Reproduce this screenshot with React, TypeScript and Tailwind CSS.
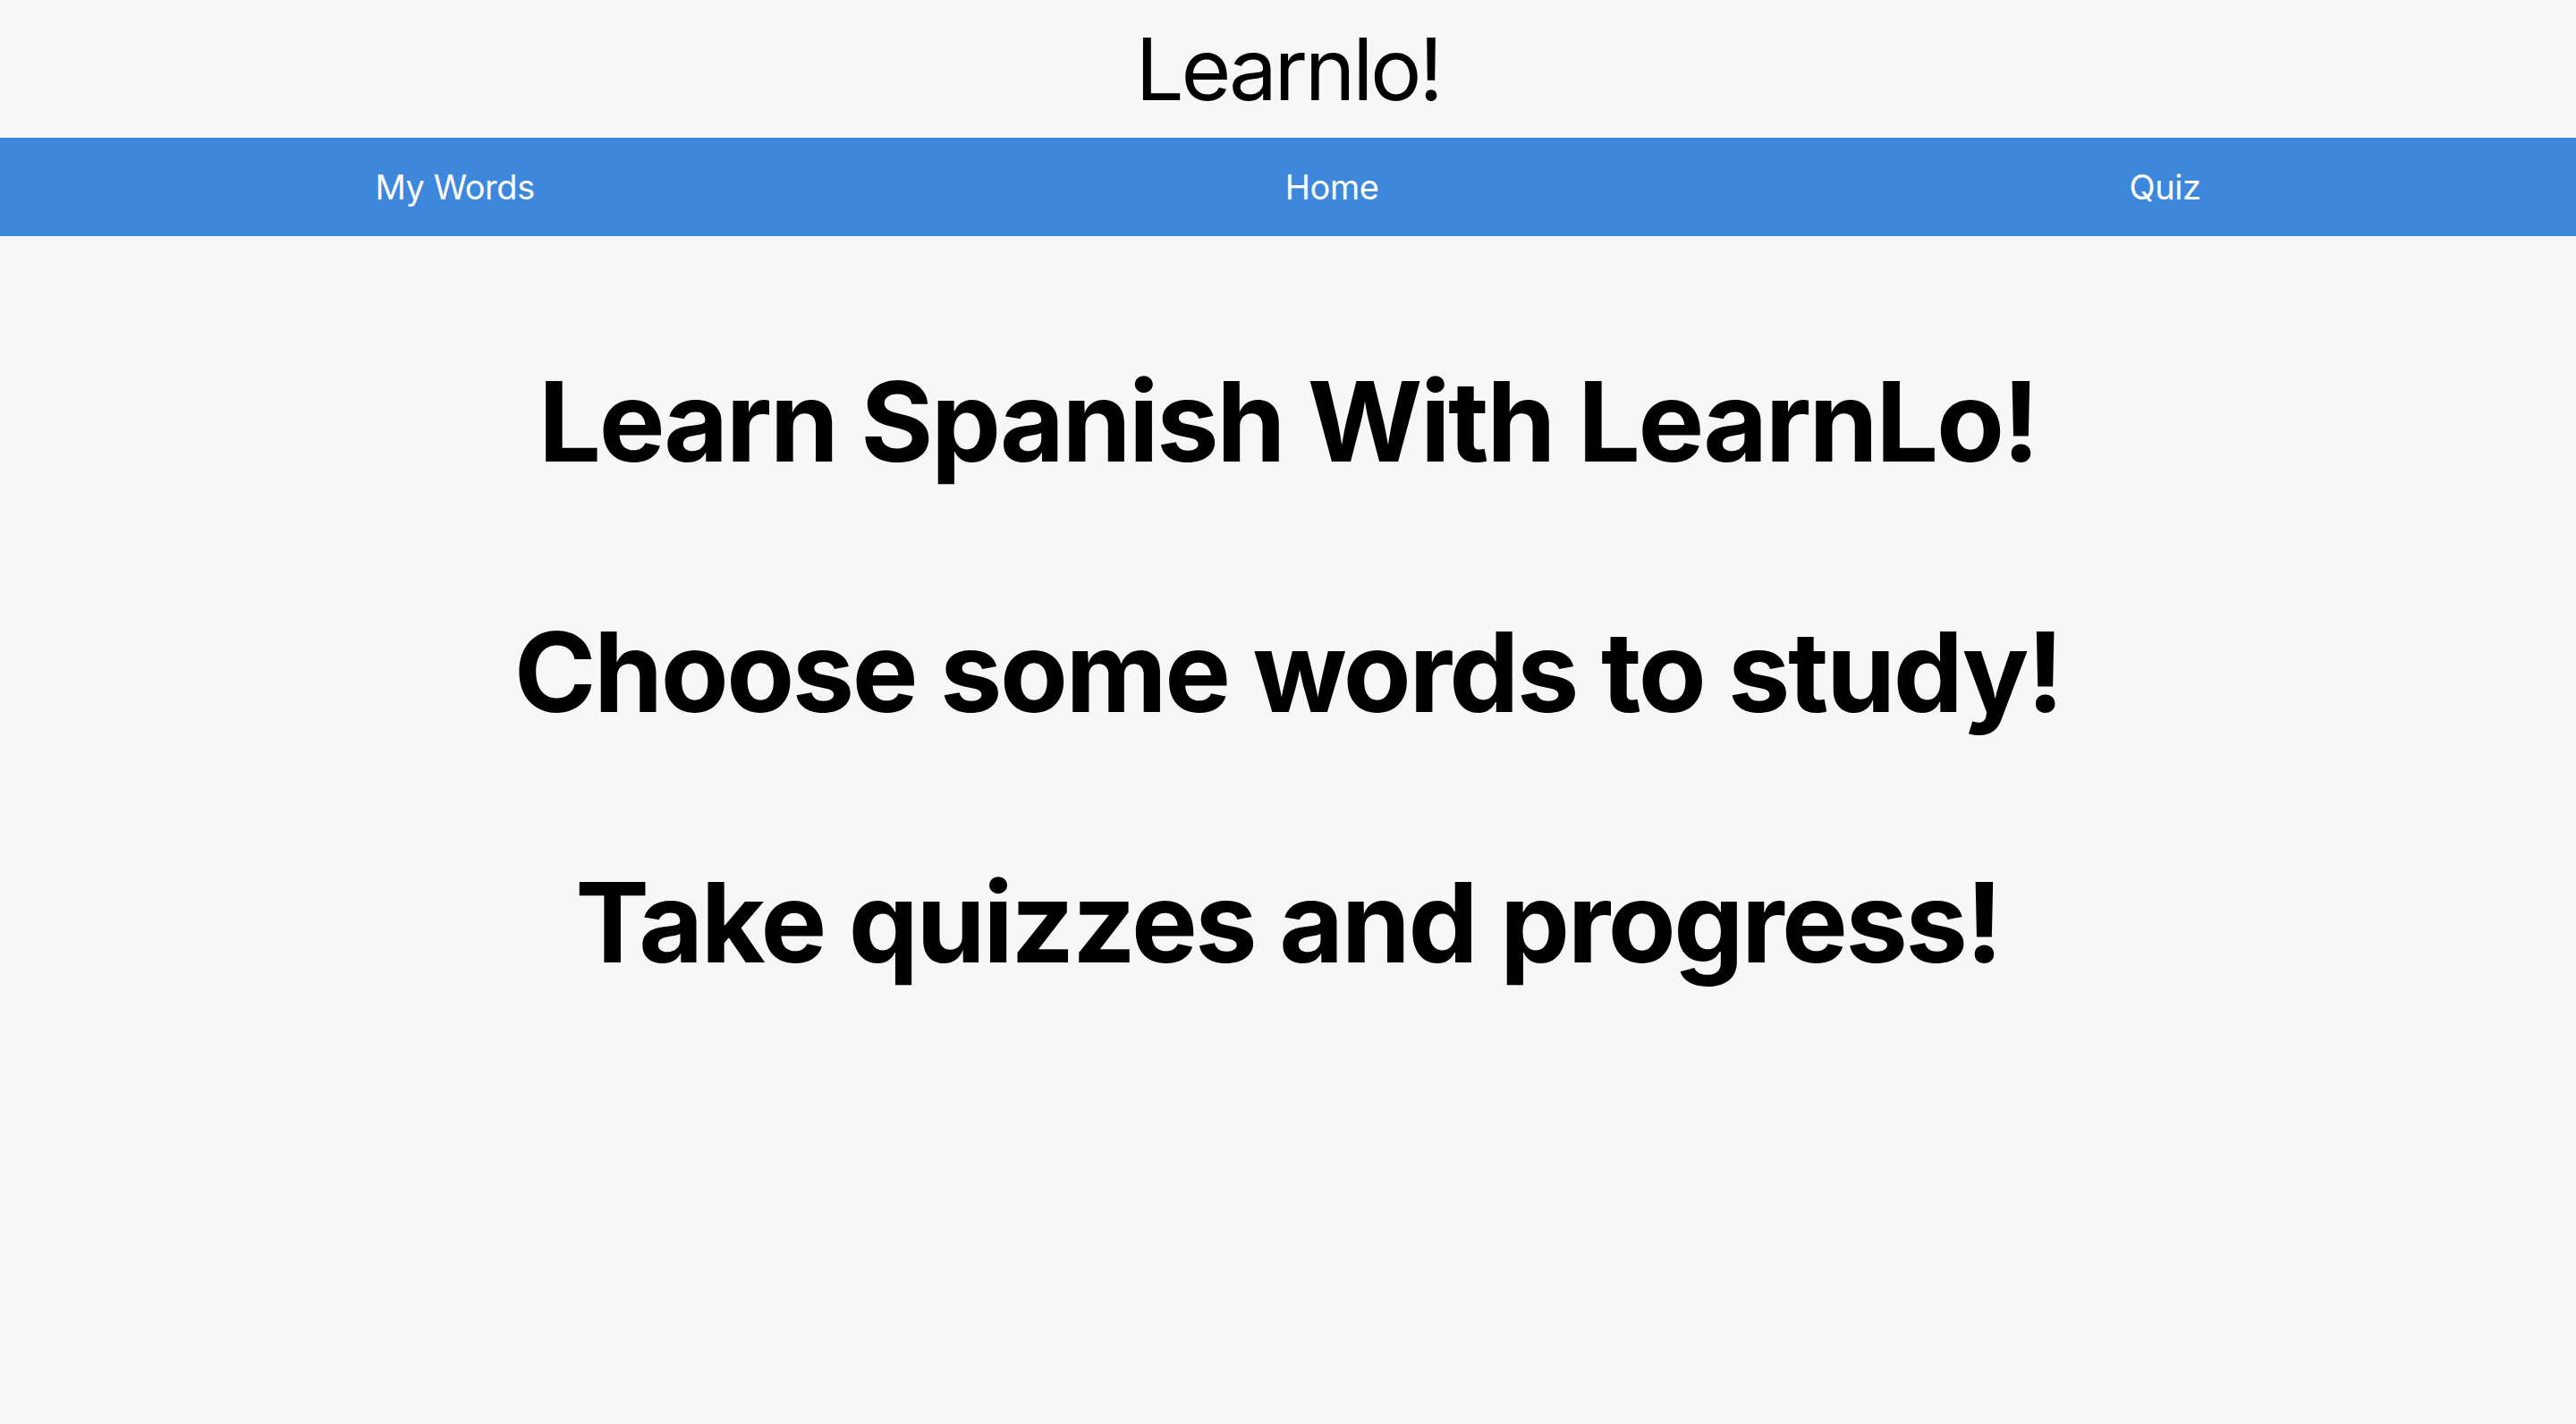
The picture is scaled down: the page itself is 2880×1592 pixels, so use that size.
const NAV = ["My Words", "Home", "Quiz"];

const LINES = [
  "Learn Spanish With LearnLo!",
  "Choose some words to study!",
  "Take quizzes and progress!",
];

export default function App() {
  return (
    <div className="min-h-screen bg-[#f7f7f7] text-black font-['Inter','Liberation_Sans',sans-serif]">
      {/* Header */}
      <header className="h-[154px] text-center text-[96px] leading-[154px] font-normal tracking-[-0.035em]">
        Learnlo!
      </header>

      {/* Nav bar */}
      <nav className="flex justify-around h-[110px] bg-[#3d87dd] text-white text-[38px] leading-[110px] tracking-[-0.012em]">
        {NAV.map((n) => (
          <a key={n} href="#" className="cursor-pointer">
            {n}
          </a>
        ))}
      </nav>

      {/* Hero lines */}
      <main className="flex flex-col items-center gap-[130px] pt-[132px]">
        {LINES.map((l) => (
          <h1 key={l} className="text-[124px] leading-[150px] font-bold tracking-[-0.02em]">
            {l}
          </h1>
        ))}
      </main>
    </div>
  );
}
